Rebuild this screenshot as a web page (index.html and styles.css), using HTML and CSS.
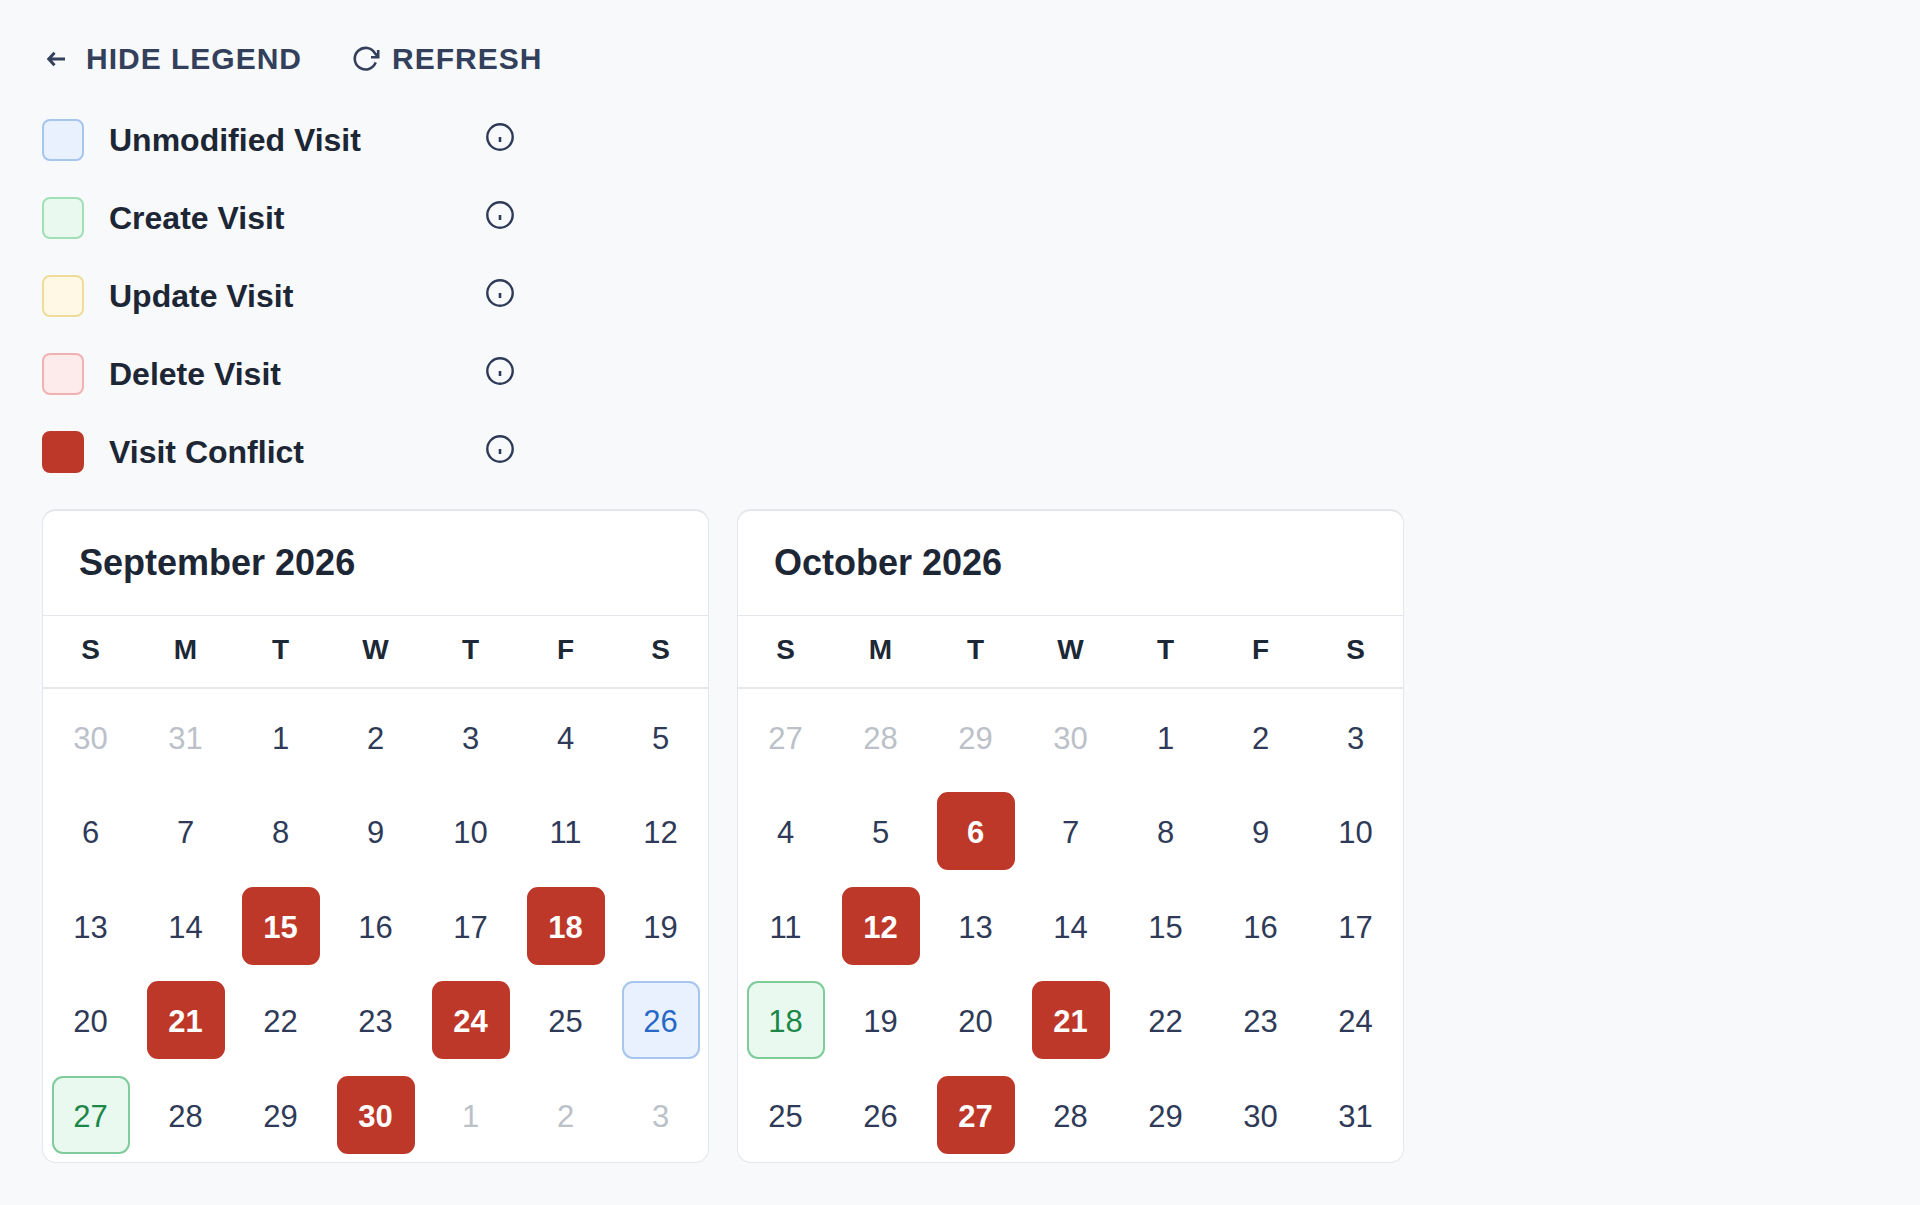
FILE: index.html
```html
<!DOCTYPE html>
<html lang="en">
<head>
<meta charset="utf-8">
<meta name="viewport" content="width=device-width, initial-scale=1">
<title>Visit calendar</title>
<link rel="stylesheet" href="styles.css">
</head>
<body>
<svg class="symbols" aria-hidden="true">
  <symbol id="info" viewBox="0 0 28 28">
    <circle cx="14" cy="14" r="12.7" fill="none" stroke="currentColor" stroke-width="2.4"/>
    <path d="M14 14v5" stroke="currentColor" stroke-width="2.6"/>
  </symbol>
</svg>
<main class="page">
  <div class="toolbar">
    <button class="action" type="button">
      <svg class="icon arrow" viewBox="0 0 28 28" aria-hidden="true"><path d="M23 14H7M12.5 7.8L6.8 14l5.7 6.2"/></svg>
      Hide legend
    </button>
    <button class="action" type="button">
      <svg class="icon" viewBox="0 0 28 28" aria-hidden="true"><path d="M23.7 17.4A10.8 10.8 0 1 1 23 8.4L26 11.6M26.2 5v7.2H19"/></svg>
      Refresh
    </button>
  </div>

  <ul class="legend">
    <li class="legend-item"><span class="swatch unmodified"></span><span class="legend-label">Unmodified Visit</span><button class="info" type="button" aria-label="About unmodified visits"><svg class="icon"><use href="#info"/></svg></button></li>
    <li class="legend-item"><span class="swatch create"></span><span class="legend-label">Create Visit</span><button class="info" type="button" aria-label="About created visits"><svg class="icon"><use href="#info"/></svg></button></li>
    <li class="legend-item"><span class="swatch update"></span><span class="legend-label">Update Visit</span><button class="info" type="button" aria-label="About updated visits"><svg class="icon"><use href="#info"/></svg></button></li>
    <li class="legend-item"><span class="swatch delete"></span><span class="legend-label">Delete Visit</span><button class="info" type="button" aria-label="About deleted visits"><svg class="icon"><use href="#info"/></svg></button></li>
    <li class="legend-item"><span class="swatch conflict"></span><span class="legend-label">Visit Conflict</span><button class="info" type="button" aria-label="About visit conflicts"><svg class="icon"><use href="#info"/></svg></button></li>
  </ul>

  <div class="months">
    <section class="month">
      <h2 class="month-title">September 2026</h2>
      <table class="days">
        <thead>
          <tr><th>S</th><th>M</th><th>T</th><th>W</th><th>T</th><th>F</th><th>S</th></tr>
        </thead>
        <tbody>
          <tr><td class="outside">30</td><td class="outside">31</td><td>1</td><td>2</td><td>3</td><td>4</td><td>5</td></tr>
          <tr><td>6</td><td>7</td><td>8</td><td>9</td><td>10</td><td>11</td><td>12</td></tr>
          <tr><td>13</td><td>14</td><td class="marked"><span class="mark conflict">15</span></td><td>16</td><td>17</td><td class="marked"><span class="mark conflict">18</span></td><td>19</td></tr>
          <tr><td>20</td><td class="marked"><span class="mark conflict">21</span></td><td>22</td><td>23</td><td class="marked"><span class="mark conflict">24</span></td><td>25</td><td class="marked"><span class="mark unmodified">26</span></td></tr>
          <tr><td class="marked"><span class="mark create">27</span></td><td>28</td><td>29</td><td class="marked"><span class="mark conflict">30</span></td><td class="outside">1</td><td class="outside">2</td><td class="outside">3</td></tr>
        </tbody>
      </table>
    </section>
    <section class="month">
      <h2 class="month-title">October 2026</h2>
      <table class="days">
        <thead>
          <tr><th>S</th><th>M</th><th>T</th><th>W</th><th>T</th><th>F</th><th>S</th></tr>
        </thead>
        <tbody>
          <tr><td class="outside">27</td><td class="outside">28</td><td class="outside">29</td><td class="outside">30</td><td>1</td><td>2</td><td>3</td></tr>
          <tr><td>4</td><td>5</td><td class="marked"><span class="mark conflict">6</span></td><td>7</td><td>8</td><td>9</td><td>10</td></tr>
          <tr><td>11</td><td class="marked"><span class="mark conflict">12</span></td><td>13</td><td>14</td><td>15</td><td>16</td><td>17</td></tr>
          <tr><td class="marked"><span class="mark create">18</span></td><td>19</td><td>20</td><td class="marked"><span class="mark conflict">21</span></td><td>22</td><td>23</td><td>24</td></tr>
          <tr><td>25</td><td>26</td><td class="marked"><span class="mark conflict">27</span></td><td>28</td><td>29</td><td>30</td><td>31</td></tr>
        </tbody>
      </table>
    </section>
  </div>
</main>
</body>
</html>
```
FILE: styles.css
```css
* {
  box-sizing: border-box;
}

body {
  margin: 0;
  background: #f7f9fa;
  color: #1d2635;
  font-family: "Liberation Sans", Arial, sans-serif;
}

.symbols {
  display: none;
}

.page {
  padding: 41px 42px;
}

.toolbar {
  display: flex;
  gap: 50px;
}

.action {
  display: flex;
  align-items: center;
  gap: 12px;
  padding: 0;
  border: 0;
  background: none;
  color: #333f5b;
  font: bold 30px/36px "Liberation Sans", Arial, sans-serif;
  letter-spacing: 1px;
  text-transform: uppercase;
  cursor: pointer;
}

.icon {
  display: block;
  width: 28px;
  height: 28px;
  fill: none;
  stroke: currentColor;
  stroke-width: 2.6;
}

.arrow {
  stroke-width: 3;
  margin-right: 4px;
}

.legend {
  display: flex;
  flex-direction: column;
  gap: 36px;
  max-width: 472px;
  margin: 42px 0 36px;
  padding: 0;
  list-style: none;
}

.legend-item {
  display: flex;
  align-items: center;
  gap: 25px;
}

.legend-label {
  flex: 1;
  font-size: 32px;
  font-weight: bold;
  line-height: 42px;
}

.info {
  align-self: flex-start;
  padding: 4px 0 0;
  border: 0;
  background: none;
  color: #2e3a57;
  cursor: pointer;
}

.swatch {
  width: 42px;
  height: 42px;
  border: 2px solid;
  border-radius: 8px;
}

.unmodified {
  border-color: #a6c5ef;
  background: #e9f1fe;
  color: #2868c8;
}

.create {
  border-color: #a1dfb7;
  background: #e9f9ef;
  color: #1c8746;
}

.update {
  border-color: #f0dc98;
  background: #fff8e4;
}

.delete {
  border-color: #f1b1b3;
  background: #fdeaea;
}

.conflict {
  border-color: #be382a;
  background: #be382a;
  color: #fff;
  font-weight: bold;
}

.months {
  display: flex;
  flex-wrap: wrap;
  gap: 28px;
}

.month {
  flex: 0 1 667px;
  border: 1px solid #e3e6ea;
  border-top-width: 2px;
  border-radius: 14px;
  background: #fff;
}

.month-title {
  margin: 0;
  padding: 31px 36px;
  border-bottom: 1px solid #e3e6ea;
  font-size: 36px;
  line-height: 42px;
}

.days {
  width: 100%;
  border-collapse: separate;
  border-spacing: 0;
  table-layout: fixed;
  text-align: center;
}

.days th {
  padding: 16px 0 19px;
  border-bottom: 2px solid #e6e9ec;
  color: #1c2836;
  font-size: 28px;
  line-height: 36px;
}

.days td {
  height: 95px;
  padding: 4px 0 0;
  color: #2e3a57;
  font-size: 31px;
  line-height: 36px;
}

.days tr:nth-child(even) td {
  height: 94px;
}

.days .marked {
  padding: 0;
}

.days .outside {
  color: #bbc0c9;
}

.mark {
  display: flex;
  align-items: center;
  justify-content: center;
  width: 78px;
  height: 78px;
  margin: 0 auto;
  padding-top: 4px;
  border: 2px solid;
  border-radius: 11px;
}

.mark.unmodified {
  border-color: #a6c5ef;
}

.mark.create {
  border-color: #7fcb99;
}

.mark.conflict {
  border-color: #be382a;
}
```
